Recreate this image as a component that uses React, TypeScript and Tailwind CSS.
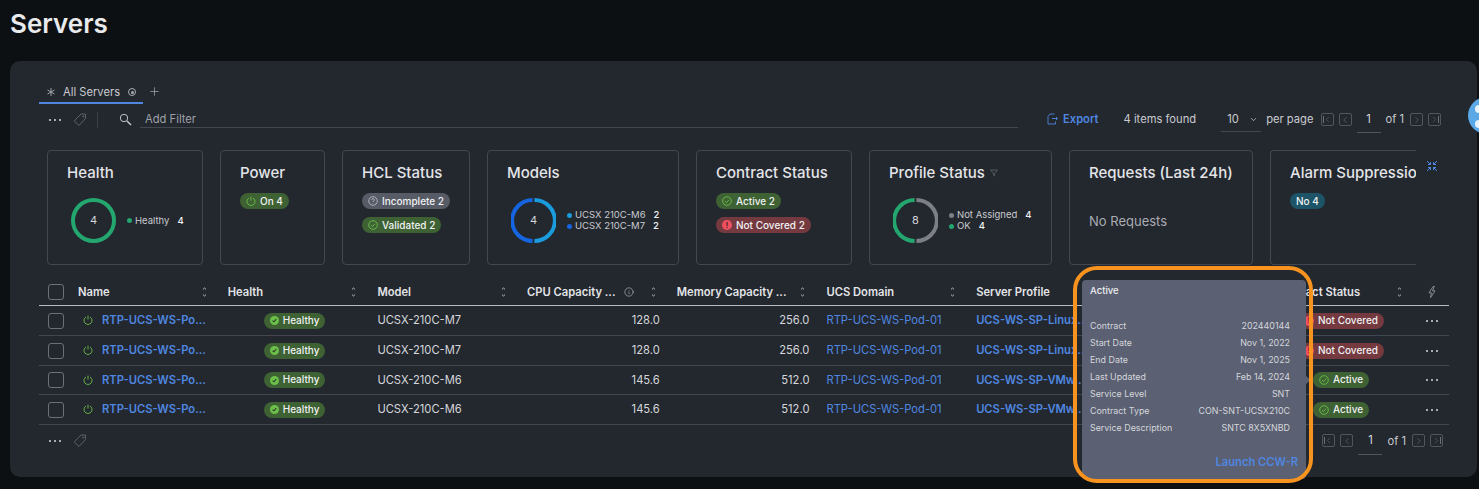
import { ChevronDown, ChevronLeft, ChevronRight, Info, Plus } from "lucide-react";
import type { ReactNode } from "react";

function Dots() {
  return (
    <div className="flex items-center gap-[3px]">
      <span className="h-[2px] w-[2px] rounded-full bg-[#d5d7dc]" />
      <span className="h-[2px] w-[2px] rounded-full bg-[#d5d7dc]" />
      <span className="h-[2px] w-[2px] rounded-full bg-[#d5d7dc]" />
    </div>
  );
}

function TagIcon() {
  return (
    <svg width="14" height="14" viewBox="0 0 14 14" fill="none" stroke="#5c616b" strokeWidth="1">
      <path d="M8 1h4.5v4.5L6 12.5 1.2 8z" />
      <circle cx="10.3" cy="3.4" r="0.7" />
    </svg>
  );
}

function SearchIcon() {
  return (
    <svg width="13" height="13" viewBox="0 0 13 13" fill="none" stroke="#c0c3c9" strokeWidth="1">
      <circle cx="5" cy="5" r="3.7" />
      <path d="M8 8l4 4" strokeWidth="1.6" />
    </svg>
  );
}

function CheckCircle({ color = "#6cc04a" }: { color?: string }) {
  return (
    <svg width="10" height="10" viewBox="0 0 10 10" fill="none" stroke={color} strokeWidth="0.9">
      <circle cx="5" cy="5" r="4.3" />
      <path d="M3 5.2l1.5 1.4L7 3.8" />
    </svg>
  );
}

function PowerIcon({ size = 10 }: { size?: number }) {
  return (
    <svg width={size} height={size} viewBox="0 0 10 10" fill="none" stroke="#6cc04a" strokeWidth="0.9">
      <path d="M3 2a4 4 0 1 0 4 0" />
      <path d="M5 0.6V4.6" />
    </svg>
  );
}

function QuestionIcon() {
  return (
    <svg width="10" height="10" viewBox="0 0 10 10" fill="none" stroke="#b5b8bf" strokeWidth="0.9">
      <circle cx="5" cy="5" r="4.3" />
      <path d="M3.7 3.9a1.3 1.3 0 1 1 1.8 1.2c-.4.2-.5.4-.5.9" />
      <path d="M5 7.1v.5" />
    </svg>
  );
}

function AlertIcon() {
  return (
    <span className="flex h-[10px] w-[10px] items-center justify-center rounded-full bg-[#f0505f] text-[7px] font-bold leading-none text-[#3a2024]">
      !
    </span>
  );
}

function Pill({ tone, icon, children }: { tone: string; icon?: ReactNode; children: ReactNode }) {
  return (
    <span className={`inline-flex h-[16px] items-center gap-[4px] rounded-full px-[6px] text-[10px] font-medium leading-none text-[#f0f1f3] ${tone}`}>
      {icon}
      {children}
    </span>
  );
}

function Card({ title, width, children, cut }: { title: ReactNode; width: string; children?: ReactNode; cut?: boolean }) {
  return (
    <div className={`h-[115px] shrink-0 rounded-[4px] border border-[#43474f] pl-[19px] pt-[13px] ${width} ${cut ? "rounded-r-none border-r-0" : ""}`}>
      <div className="flex items-center gap-[5px] whitespace-nowrap text-[15px] font-medium leading-[18px] text-[#e3e5e8]">{title}</div>
      {children}
    </div>
  );
}

function Ring({ segments, label }: { segments: string; label: string }) {
  return (
    <div className="relative h-[45px] w-[45px] shrink-0">
      <svg width="45" height="45" viewBox="0 0 45 45" fill="none" strokeWidth="4">
        {segments === "green" && <circle cx="22.5" cy="22.5" r="20.5" stroke="#24a66f" />}
        {segments === "blue" && (
          <>
            <path d="M23.4 2A20.5 20.5 0 0 1 23.4 43" stroke="#1a9bdc" />
            <path d="M21.6 43A20.5 20.5 0 0 1 21.6 2" stroke="#1565e0" />
          </>
        )}
        {segments === "profile" && (
          <>
            <path d="M23.4 2A20.5 20.5 0 0 1 23.4 43" stroke="#7c7f85" />
            <path d="M21.6 43A20.5 20.5 0 0 1 21.6 2" stroke="#24a66f" />
          </>
        )}
      </svg>
      <span className="absolute inset-0 flex items-center justify-center text-[11px] text-[#d5d7dc]">{label}</span>
    </div>
  );
}

function Legend({ rows }: { rows: { color: string; label: string; count: number }[] }) {
  return (
    <div className="flex flex-col">
      {rows.map((r) => (
        <div key={r.label} className="flex h-[11px] items-center text-[9.5px] leading-none text-[#c9cbd0]">
          <span className={`mr-[3px] h-[5px] w-[5px] rounded-full ${r.color}`} />
          <span className="whitespace-nowrap">{r.label}</span>
          <span className="ml-[8px] font-medium text-[#f0f1f3]">{r.count}</span>
        </div>
      ))}
    </div>
  );
}

function PagerBox({ children }: { children: ReactNode }) {
  return (
    <span className="flex h-[13px] w-[13px] items-center justify-center rounded-[2px] border border-[#51555d] text-[#6b6f78]">
      {children}
    </span>
  );
}

function Pager() {
  return (
    <div className="flex items-center text-[11.2px] text-[#c9cbd0]">
      <PagerBox>
        <span className="flex items-center">
          <span className="h-[7px] w-px bg-[#6b6f78]" />
          <ChevronLeft size={9} strokeWidth={1.5} className="-ml-[1px]" />
        </span>
      </PagerBox>
      <span className="ml-[5px]">
        <PagerBox>
          <ChevronLeft size={10} strokeWidth={1.5} />
        </PagerBox>
      </span>
      <span className="ml-[5px] w-[24px] border-b border-[#51555d] pb-[5px] pt-[5px] text-center text-[#d5d7dc]">1</span>
      <span className="ml-[5px] mr-[6px] whitespace-nowrap">of 1</span>
      <PagerBox>
        <ChevronRight size={10} strokeWidth={1.5} />
      </PagerBox>
      <span className="ml-[5px]">
        <PagerBox>
          <span className="flex items-center">
            <ChevronRight size={9} strokeWidth={1.5} className="-mr-[1px]" />
            <span className="h-[7px] w-px bg-[#6b6f78]" />
          </span>
        </PagerBox>
      </span>
    </div>
  );
}

function Sort() {
  return (
    <svg width="5" height="10" viewBox="0 0 5 10" fill="none" stroke="#c9cbd0" strokeWidth="0.9">
      <path d="M1 2.4l1.5-1.4L4 2.4M1 7.6L2.5 9 4 7.6" />
    </svg>
  );
}

function Checkbox() {
  return <span className="block h-[16px] w-[16px] rounded-[3px] border border-[#6b6f78]" />;
}

const rows = [
  { model: "UCSX-210C-M7", cpu: "128.0", mem: "256.0", profile: "UCS-WS-SP-Linux...", contract: "bad", h: "h-[30px]" },
  { model: "UCSX-210C-M7", cpu: "128.0", mem: "256.0", profile: "UCS-WS-SP-Linux...", contract: "bad", h: "h-[30px]" },
  { model: "UCSX-210C-M6", cpu: "145.6", mem: "512.0", profile: "UCS-WS-SP-VMw...", contract: "ok", h: "h-[29px]" },
  { model: "UCSX-210C-M6", cpu: "145.6", mem: "512.0", profile: "UCS-WS-SP-VMw...", contract: "ok", h: "h-[30px]" },
];

const tip = [
  ["Contract", "202440144"],
  ["Start Date", "Nov 1, 2022"],
  ["End Date", "Nov 1, 2025"],
  ["Last Updated", "Feb 14, 2024"],
  ["Service Level", "SNT"],
  ["Contract Type", "CON-SNT-UCSX210C"],
  ["Service Description", "SNTC 8X5XNBD"],
];

const headCell = "flex items-center justify-between whitespace-nowrap text-[11.2px] font-semibold text-[#e3e5e8]";

export default function App() {
  return (
    <div className="relative h-[489px] w-[1479px] overflow-hidden bg-[#0d1013] font-['Inter','Noto_Sans',sans-serif]">
      <h1 className="pl-[10px] pt-[7px] text-[26px] font-semibold leading-[34px] text-[#e9eaec]">Servers</h1>

      <div className="ml-[10px] mt-[20px] h-[416px] w-[1467px] rounded-[10px] bg-[#23272e] pl-[29px] pt-[20px]">
        {/* tabs */}
        <div className="flex h-[23px] items-start">
          <div className="flex h-[23px] w-[104px] items-start border-b-2 border-[#4f87e0] pl-[8px] pt-[4px] text-[11.2px] leading-[14px] text-[#c9cbd0]">
            <svg className="mr-[8px] mt-[3px]" width="8" height="8" viewBox="0 0 8 8" stroke="#a9acb3" strokeWidth="0.9">
              <path d="M4 0v8M0.5 2l7 4M7.5 2l-7 4" />
            </svg>
            <span>All Servers</span>
            <span className="ml-[8px] mt-[3px] flex h-[8px] w-[8px] items-center justify-center rounded-full border border-[#a9acb3]">
              <span className="h-[3px] w-[3px] rounded-full bg-[#a9acb3]" />
            </span>
          </div>
          <Plus size={13} strokeWidth={1.2} className="ml-[5px] mt-[4px] text-[#b5b8bf]" />
        </div>

        {/* filter row */}
        <div className="mt-[3px] flex h-[25px] w-[1410px] items-center">
          <div className="ml-[10px]">
            <Dots />
          </div>
          <div className="ml-[12px]">
            <TagIcon />
          </div>
          <span className="ml-[10px] h-[16px] w-px bg-[#3a3e46]" />
          <div className="ml-[21px]">
            <SearchIcon />
          </div>
          <div className="ml-[8px] flex h-[21px] w-[878px] items-center self-start border-b border-[#43474f] pl-[5px] pt-[4px] text-[11.2px] text-[#9ea1a8]">
            Add Filter
          </div>
          <div className="ml-[29px] flex items-center gap-[5px] text-[11.2px] font-semibold text-[#4f87e0]">
            <svg width="11" height="12" viewBox="0 0 11 12" fill="none" stroke="#4f87e0" strokeWidth="0.9">
              <path d="M7.5 1H3L1 3.5V11h7.5V8.5" />
              <path d="M5 5.5h5.5M9 4l1.5 1.5L9 7" />
            </svg>
            Export
          </div>
          <span className="ml-[25px] whitespace-nowrap text-[11.2px] text-[#c9cbd0]">4 items found</span>
          <div className="ml-[25px] flex h-[25px] w-[40px] items-center justify-between border-b border-[#43474f] pl-[6px] pr-[3px] text-[11.2px] text-[#c9cbd0]">
            10 <ChevronDown size={9} />
          </div>
          <span className="ml-[5px] mr-[7px] whitespace-nowrap text-[11.2px] text-[#c9cbd0]">per page</span>
          <Pager />
        </div>

        {/* summary cards */}
        <div className="mt-[18px] flex w-[1377px] gap-[17px] overflow-hidden pl-[8px]">
          <Card title="Health" width="w-[156px]">
            <div className="mt-[16px] flex items-center gap-[11px] pl-[4px]">
              <Ring segments="green" label="4" />
              <Legend rows={[{ color: "bg-[#24a66f]", label: "Healthy", count: 4 }]} />
            </div>
          </Card>
          <Card title="Power" width="w-[105px]">
            <div className="mt-[11px] flex">
              <Pill tone="bg-[#3e6234]" icon={<PowerIcon />}>On 4</Pill>
            </div>
          </Card>
          <Card title="HCL Status" width="w-[128px]">
            <div className="mt-[11px] flex flex-col items-start gap-[8px]">
              <Pill tone="bg-[#575b66]" icon={<QuestionIcon />}>Incomplete 2</Pill>
              <Pill tone="bg-[#3e6234]" icon={<CheckCircle />}>Validated 2</Pill>
            </div>
          </Card>
          <Card title="Models" width="w-[192px]">
            <div className="mt-[16px] flex items-center gap-[11px] pl-[4px]">
              <Ring segments="blue" label="4" />
              <Legend
                rows={[
                  { color: "bg-[#1a9bdc]", label: "UCSX 210C-M6", count: 2 },
                  { color: "bg-[#1565e0]", label: "UCSX 210C-M7", count: 2 },
                ]}
              />
            </div>
          </Card>
          <Card title="Contract Status" width="w-[156px]">
            <div className="mt-[11px] flex flex-col items-start gap-[8px]">
              <Pill tone="bg-[#3e6234]" icon={<CheckCircle />}>Active 2</Pill>
              <Pill tone="bg-[#743a40]" icon={<AlertIcon />}>Not Covered 2</Pill>
            </div>
          </Card>
          <Card
            title={
              <>
                Profile Status
                <svg width="8" height="8" viewBox="0 0 8 8" fill="none" stroke="#5c616b" strokeWidth="0.9">
                  <path d="M0.5 1h7L4.6 4.2V7L3.4 6V4.2z" />
                </svg>
              </>
            }
            width="w-[183px]"
          >
            <div className="mt-[16px] flex items-center gap-[11px] pl-[4px]">
              <Ring segments="profile" label="8" />
              <Legend
                rows={[
                  { color: "bg-[#7c7f85]", label: "Not Assigned", count: 4 },
                  { color: "bg-[#24a66f]", label: "OK", count: 4 },
                ]}
              />
            </div>
          </Card>
          <Card title="Requests (Last 24h)" width="w-[184px]">
            <div className="mt-[30px] text-[13px] leading-[18px] text-[#a9acb3]">No Requests</div>
          </Card>
          <Card title="Alarm Suppression" width="w-[160px]" cut>
            <div className="mt-[11px] flex">
              <Pill tone="bg-[#1e5468]">No 4</Pill>
            </div>
          </Card>
        </div>

        {/* server table */}
        <div className="mt-[5px] w-[1410px]">
          <div className="grid h-[36px] grid-cols-[39px_repeat(8,149.7px)_135px_1fr] items-center border-b border-[#b8bbc1] pt-[9px]">
            <div className="pl-[9px]">
              <Checkbox />
            </div>
            {["Name", "Health", "Model"].map((h) => (
              <div key={h} className={`${headCell} pr-[21px]`}>
                {h}
                <Sort />
              </div>
            ))}
            <div className={`${headCell} pr-[21px]`}>
              CPU Capacity ...
              <Info size={10} strokeWidth={1.2} className="ml-[8px] mr-auto" />
              <Sort />
            </div>
            <div className={`${headCell} pr-[21px]`}>
              Memory Capacity ...
              <Sort />
            </div>
            <div className={`${headCell} pr-[21px]`}>
              UCS Domain
              <Sort />
            </div>
            <div className={`${headCell} pr-[21px]`}>Server Profile</div>
            <div className={`${headCell} col-start-10 pr-[9px]`}>
              Contract Status
              <Sort />
            </div>
            <div className="flex justify-center pl-[4px]">
              <svg width="8" height="12" viewBox="0 0 8 12" fill="none" stroke="#9ea1a8" strokeWidth="0.8">
                <path d="M5 0.5L1 6.8h2.4L2.6 11.5 7 4.8H4.4L6.4 0.5z" />
              </svg>
            </div>
          </div>

          {rows.map((r, i) => (
            <div
              key={i}
              className={`grid grid-cols-[39px_repeat(8,149.7px)_135px_1fr] items-center border-b border-[#43474f] text-[11.2px] text-[#d5d7dc] ${r.h}`}
            >
              <div className="pl-[9px]">
                <Checkbox />
              </div>
              <div className="flex items-center gap-[9px] whitespace-nowrap pl-[5px] font-semibold text-[#4f87e0]">
                <PowerIcon />
                RTP-UCS-WS-Po...
              </div>
              <div className="flex pl-[36px]">
                <Pill
                  tone="bg-[#3e6234]"
                  icon={
                    <span className="flex h-[9px] w-[9px] items-center justify-center rounded-full bg-[#6cc04a]">
                      <svg width="7" height="7" viewBox="0 0 7 7" fill="none" stroke="#2a3a26" strokeWidth="1.1">
                        <path d="M1.6 3.6l1.3 1.2 2.4-2.6" />
                      </svg>
                    </span>
                  }
                >
                  <span className="pb-[2px]">Healthy</span>
                </Pill>
              </div>
              <div>{r.model}</div>
              <div className="pr-[17px] text-right">{r.cpu}</div>
              <div className="pr-[17px] text-right">{r.mem}</div>
              <div className="text-[#4f87e0]">RTP-UCS-WS-Pod-01</div>
              <div className="whitespace-nowrap font-semibold text-[#4f87e0]">{r.profile}</div>
              <div className="col-start-10 flex justify-center pr-[4px]">
                {r.contract === "bad" ? (
                  <Pill tone="bg-[#743a40]" icon={<AlertIcon />}>
                    <span className="pb-[2px]">Not Covered</span>
                  </Pill>
                ) : (
                  <Pill tone="bg-[#3e6234]" icon={<CheckCircle />}>
                    <span className="pb-[2px]">Active</span>
                  </Pill>
                )}
              </div>
              <div className="flex justify-center pl-[4px]">
                <Dots />
              </div>
            </div>
          ))}

          <div className="flex h-[32px] items-center justify-between pl-[10px] pr-[6px]">
            <div className="flex items-center gap-[12px]">
              <Dots />
              <TagIcon />
            </div>
            <Pager />
          </div>
        </div>
      </div>

      {/* right edge avatar */}
      <div className="absolute left-[1468px] top-[97px] h-[37px] w-[37px] rounded-full bg-[#5aa9e6]">
        <span className="absolute left-[7px] top-[8px] h-[8px] w-[8px] rounded-full bg-[#e8f2fb]" />
        <span className="absolute left-[7px] top-[23px] h-[8px] w-[8px] rounded-full bg-[#e8f2fb]" />
      </div>

      {/* collapse icon */}
      <svg className="absolute left-[1426px] top-[160px]" width="12" height="12" viewBox="0 0 12 12" fill="none" stroke="#4f87e0" strokeWidth="1">
        <path d="M1 1l3.5 3.5M4.5 2v2.5H2M11 1L7.5 4.5M7.5 2v2.5H10M1 11l3.5-3.5M4.5 10V7.5H2M11 11L7.5 7.5M7.5 10V7.5H10" />
      </svg>

      {/* contract tooltip, with the orange annotation ring around it */}
      <div className="absolute left-[1082px] top-[280px] flex h-[199px] w-[224px] flex-col rounded-[4px] bg-[#5b6072] pl-[8px] pr-[16px] pt-[5px] text-[8.9px] text-[#d5d7dc]">
        <div className="text-[9.5px] font-medium leading-[12px] text-[#f0f1f3]">Active</div>
        <div className="mt-[20px] flex flex-col">
          {tip.map(([k, v]) => (
            <div key={k} className="flex h-[17px] items-center justify-between whitespace-nowrap">
              <span>{k}</span>
              <span>{v}</span>
            </div>
          ))}
        </div>
        <div className="-mr-[8px] mt-auto pb-[8px] text-right text-[11.2px] font-semibold text-[#4f87e0]">Launch CCW-R</div>
        <span className="absolute right-[-3px] top-[97px] h-[6px] w-[6px] rotate-45 bg-[#5b6072]" />
      </div>
      <div className="absolute left-[1073px] top-[266px] h-[217px] w-[240px] rounded-[24px] border-[4px] border-[#f7931e]" />
    </div>
  );
}
